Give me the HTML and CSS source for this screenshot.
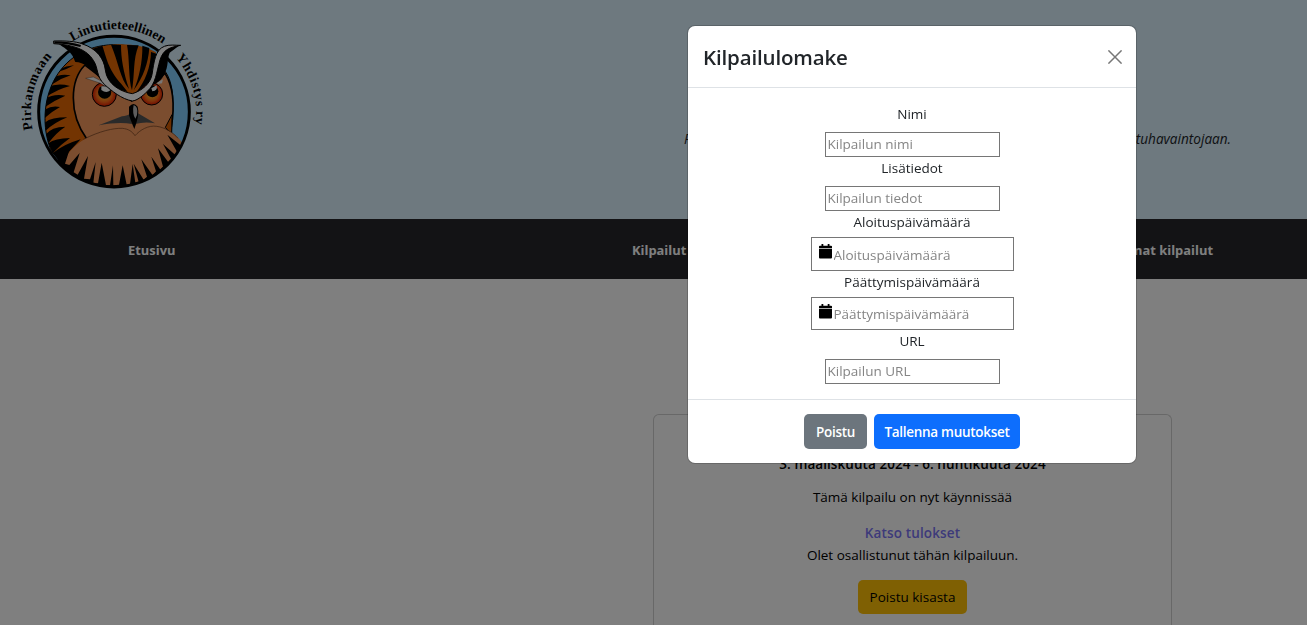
FILE: index.html
```html
<!DOCTYPE html>
<html lang="fi">
<head>
<meta charset="utf-8">
<title>Kilpailut</title>
<link rel="stylesheet" href="styles.css">
</head>
<body>
<header class="banner">
  <svg class="logo" viewBox="0 0 630 570" role="img" aria-label="Pirkanmaan Lintutieteellinen Yhdistys ry">
    <defs>
      <path id="arcLeft" d="M68 358A250 250 0 0 1 131 134"/>
      <path id="arcTop" d="M188 94A246 246 0 0 1 462 104"/>
      <path id="arcRight" d="M497 143A249 249 0 0 1 555 348"/>
      <clipPath id="disc"><circle cx="312" cy="305" r="225"/></clipPath>
      <clipPath id="body"><path d="M310 104C230 106 165 145 130 215C95 285 100 370 125 425L160 470L260 400L230 120Z"/></clipPath>
      <radialGradient id="iris"><stop offset=".35" stop-color="#ff9d20"/><stop offset=".65" stop-color="#ff6a18"/><stop offset="1" stop-color="#e51a00"/></radialGradient>
    </defs>
    <g class="logo-text">
      <text><textPath href="#arcLeft" textLength="234">Pirkanmaan</textPath></text>
      <text><textPath href="#arcTop" textLength="286">Lintutieteellinen</textPath></text>
      <text><textPath href="#arcRight" textLength="214">Yhdistys ry</textPath></text>
    </g>
    <circle cx="312" cy="305" r="225" fill="#82cefe"/>
    <g clip-path="url(#disc)">
      <path d="M310 104C230 106 165 145 130 215C95 285 100 370 125 425L230 520H420L505 400L484 372L488 280C490 240 480 200 462 180C435 130 380 104 310 104Z" fill="#e66804" stroke="#000" stroke-width="3"/>
      <g clip-path="url(#body)">
        <path d="M148 178Q168 168 192 166Q170 178 150 184ZM125 205Q150 190 182 196Q155 204 128 222ZM112 232Q142 218 180 228Q140 238 108 262ZM104 268Q130 250 166 257Q135 270 104 292ZM102 300Q125 285 150 291Q128 303 103 325ZM102 340Q120 322 172 322Q132 338 106 363ZM105 375Q125 350 166 350Q138 368 115 400ZM115 400Q135 385 180 384Q150 405 128 430ZM128 430Q160 403 212 388Q175 425 148 462Z"/>
      </g>
      <path d="M225 165C180 210 175 310 230 386L270 440H450L484 350C494 290 490 230 465 190L365 273Z" fill="#f69a5e" stroke="#000" stroke-width="5"/>
      <path d="M466 352L486 314L485 374Z" fill="#d65f04" stroke="#000" stroke-width="3"/>
      <path d="M160 455C185 405 230 378 280 364C330 348 355 353 375 377C395 354 425 341 470 360C495 371 512 388 520 405L480 540H200Z" fill="#f69a5e"/>
      <path d="M220 388C270 363 310 354 337 355C356 357 366 364 375 377C390 360 415 345 440 349C465 352 490 368 504 385" fill="none" stroke="#6b3c20" stroke-width="2"/>
      <path d="M140 452L181 412L165 461L178 465L209 429L191 487L203 494L234 438L222 506L240 508L257 456L250 520L264 520L275 458L288 526L300 526L309 466L310 526L327 524L338 466L350 524L360 522L368 462L376 518L386 516L371 461L401 509L411 500L394 448L428 496L438 484L424 440L452 480L459 470L444 415L479 462L485 450L459 402L496 435L501 425L472 374L511 405L530 420L485 500L400 550H250L165 500Z"/>
    </g>
    <circle cx="312" cy="305" r="226" fill="none" stroke="#000" stroke-width="9"/>
    <path d="M249 117C310 95 390 98 438 127L420 220L366 260L286 230Z" fill="#e66804"/>
    <path d="M248 116L277 107C289 140 292 175 334 222L353 246L321 237L286 207C278 170 276 146 248 116ZM303 104L333 105C333 145 340 185 357 237C330 205 326 158 303 104ZM351 105L386 106C368 150 375 190 366 241C355 210 359 145 351 105ZM397 107L418 114C414 160 401 200 371 241C387 205 398 155 397 107ZM423 126L439 131L421 218L377 249C406 215 422 170 423 126Z"/>
    <circle cx="283" cy="253" r="36" fill="url(#iris)" stroke="#000" stroke-width="3"/>
    <circle cx="425" cy="252" r="33" fill="url(#iris)" stroke="#000" stroke-width="3"/>
    <circle cx="284" cy="246" r="20"/><circle cx="427" cy="244" r="18"/>
    <path d="M274 229Q295 226 301 241Q289 252 274 240ZM424 235L440 226Q444 243 427 244Z" fill="#fff"/>
    <path d="M227 205L250 201L300 226L312 244L270 219Z" fill="#f5f5f5" stroke="#222" stroke-width="1"/>
    <path d="M440 218L459 208L456 220L444 222Z" fill="#eee"/>
    <path d="M132 94C185 125 188 135 196 156C222 157 242 174 266 202L290 227L278 170L247 122L213 99Z"/>
    <path d="M510 105L479 128C471 148 476 168 463 193C453 218 428 225 404 237L424 202L439 147L466 107Z"/>
    <path d="M131 93C166 92 197 94 215 101C262 116 282 147 286 180C291 224 334 246 367 251C397 242 421 220 426 194C432 155 436 119 463 109C478 103 495 106 512 106C479 112 460 118 450 150C439 188 438 220 412 244C399 257 381 272 367 273C334 267 306 243 284 224C257 198 266 174 250 151C232 119 190 104 131 101Z" fill="#fff" stroke="#000" stroke-width="3"/>
    <path d="M133 97Q180 98 212 108" fill="none" stroke="#000" stroke-width="7"/>
    <path d="M266 346L336 319C346 318 353 316 361 311L366 342Q327 335 266 346ZM384 310L435 340Q405 334 375 342Z" fill="#555"/>
    <path d="M357 290Q371 274 383 290Q390 312 373 357Q363 335 357 316Z"/>
    <path d="M371 285Q386 290 381 315L376 326Q366 310 371 285Z" fill="#bbb"/>
  </svg>
  <p class="tagline"><span>Palvelu, jossa jäsenet voivat ilmoittaa kilpailuun</span><span>lintuhavaintojaan.</span></p>
</header>
<nav class="nav"><a>Etusivu</a><a>Kilpailut</a><a>Omat kilpailut</a></nav>
<main class="content">
  <article class="card">
    <h2 class="dates">3. maaliskuuta 2024 - 6. huhtikuuta 2024</h2>
    <p class="status">Tämä kilpailu on nyt käynnissää</p>
    <a class="results">Katso tulokset</a>
    <p class="joined">Olet osallistunut tähän kilpailuun.</p>
    <button class="btn warning">Poistu kisasta</button>
  </article>
</main>
<div class="backdrop">
  <section class="modal" role="dialog" aria-labelledby="title">
    <div class="modal-header">
      <h1 class="modal-title" id="title">Kilpailulomake</h1>
      <svg class="close" viewBox="0 0 14 14"><path d="M.4.4L13.6 13.6M13.6.4L.4 13.6"/></svg>
    </div>
    <form class="modal-body">
      <label>Nimi</label><input class="field" placeholder="Kilpailun nimi">
      <label>Lisätiedot</label><input class="field" placeholder="Kilpailun tiedot">
      <label class="l-date">Aloituspäivämäärä</label>
      <div class="datefield"><svg class="cal" viewBox="0 0 13 15"><path d="M0 5H13V13.5Q13 14.5 12 14.5H1Q0 14.5 0 13.5ZM0 4V2.4Q0 1.7 1 1.7H2.5V0H4.3V1.7H8.7V0H10.5V1.7H12Q13 1.7 13 2.4V4Z"/><path class="cal-line" d="M0 4.5H13"/></svg><input placeholder="Aloituspäivämäärä"></div>
      <label class="l-date">Päättymispäivämäärä</label>
      <div class="datefield second"><svg class="cal" viewBox="0 0 13 15"><path d="M0 5H13V13.5Q13 14.5 12 14.5H1Q0 14.5 0 13.5ZM0 4V2.4Q0 1.7 1 1.7H2.5V0H4.3V1.7H8.7V0H10.5V1.7H12Q13 1.7 13 2.4V4Z"/><path class="cal-line" d="M0 4.5H13"/></svg><input placeholder="Päättymispäivämäärä"></div>
      <label>URL</label><input class="field" placeholder="Kilpailun URL">
    </form>
    <div class="modal-footer">
      <button class="btn secondary">Poistu</button>
      <button class="btn primary">Tallenna muutokset</button>
    </div>
  </section>
</div>
</body>
</html>
```
FILE: styles.css
```css
* { box-sizing: border-box; }
body {
  margin: 0; height: 625px; overflow: hidden; background: #fff; color: #000;
  font: 13.5px/22px "Open Sans", "Noto Sans", sans-serif; letter-spacing: 0;
}
h1, h2, p { margin: 0; }
.banner { height: 219px; background: #dcf2fe; display: flex; align-items: flex-start; justify-content: space-between; padding: 10px 76px 0 10px; }
.logo { width: 210px; height: 190px; }
.logo-text { font: bold 40px "Liberation Serif", serif; }
.tagline { width: 547px; margin-top: 118px; display: flex; justify-content: space-between; font-style: italic; font-size: 13.6px; white-space: nowrap; color: #212529; }
.nav { height: 60px; background: #26272b; display: grid; grid-template-columns: 504px 1fr auto; align-items: center; padding: 2px 94px 0 128px; color: #fff; font-weight: 700; font-size: 12.9px; }
.content { padding: 135px 135px 0 653px; }
.card { height: 211px; border: 1px solid #d0d0d0; border-bottom: 0; border-radius: 6px 6px 0 0; display: flex; flex-direction: column; align-items: center; padding-top: 38px; }
.dates { font-size: 13.5px; line-height: 22px; font-weight: 600; letter-spacing: .07px; }
.status { margin-top: 11px; }
.results { margin-top: 14px; color: #7b75f5; font-weight: 600; letter-spacing: .15px; }
.joined { margin-bottom: 14px; }
.btn { font: 600 13.5px/22px "Open Sans", "Noto Sans", sans-serif; letter-spacing: -.28px; border: 0; border-radius: 5px; padding: 0; height: 35px; color: #fff; white-space: nowrap; }
.warning { width: 109px; height: 34px; background: #ffc107; color: #000; font-weight: 400; letter-spacing: 0; }
.secondary { width: 63px; background: #6c757d; }
.primary { width: 146px; background: #0d6efd; }
.backdrop { position: fixed; inset: 0; background: rgba(0,0,0,.5); padding: 26px 0 0 688px; }
.modal { width: 448px; height: 437px; background: #fff; border-radius: 7px; box-shadow: 0 0 0 1px rgba(0,0,0,.18); color: #212529; }
.modal-header { height: 62px; border-bottom: 1px solid #dee2e6; display: flex; align-items: center; justify-content: space-between; padding: 1px 14px 0 15px; }
.modal-title { font-size: 20.5px; font-weight: 600; line-height: 30px; letter-spacing: -.15px; }
.close { width: 14px; height: 14px; stroke: #777; stroke-width: 1.5; fill: none; }
.modal-body { height: 311px; display: flex; flex-direction: column; align-items: center; padding-top: 15px; }
.modal-body label { height: 29px; line-height: 22px; }
.modal-body .l-date { height: 26px; }
.field { width: 175px; height: 25px; border: 1px solid #767676; padding: 0 2px 1px; font: inherit; background: #fff; border-radius: 0; }
input::placeholder { color: #858585; opacity: 1; }
.datefield { width: 203px; height: 34px; border: 1px solid #767676; display: flex; align-items: flex-start; padding: 6px 0 0 7px; gap: 2px; }
.datefield input { border: 0; padding: 0; height: 21px; width: 170px; font: inherit; }
.datefield.second { height: 33px; }
.datefield.second input { height: 20px; }
.cal { width: 13px; height: 15px; flex: none; }
.cal-line { stroke: #aaa; stroke-width: 1; }
.modal-footer { height: 64px; border-top: 1px solid #dee2e6; display: flex; justify-content: center; align-items: flex-start; gap: 7px; padding-top: 14px; }
```
